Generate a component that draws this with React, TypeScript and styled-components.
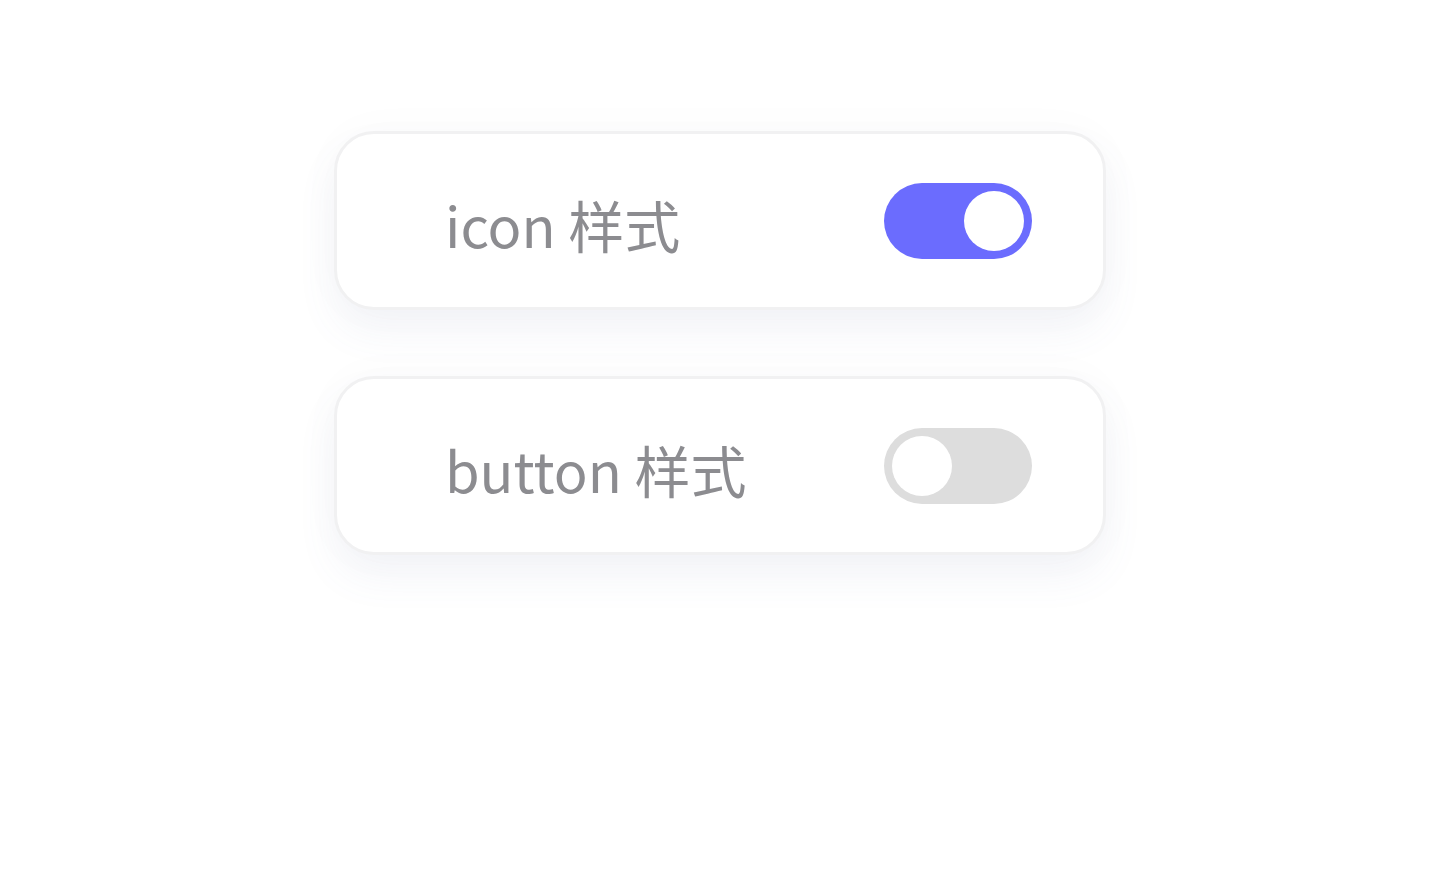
import React, { useState } from "react";
import styled, { createGlobalStyle } from "styled-components";

const GlobalStyle = createGlobalStyle`
  html, body {
    margin: 0;
    padding: 0;
    background: #ffffff;
  }
  body {
    font-family: "Noto Sans CJK SC", "Noto Sans", sans-serif;
  }
`;

const Page = styled.div`
  min-height: 100vh;
  box-sizing: border-box;
  display: flex;
  flex-direction: column;
  gap: 66px;
  padding: 131px 0 0 334px;
`;

const Card = styled.div`
  box-sizing: border-box;
  width: 772px;
  height: 179px;
  display: flex;
  align-items: center;
  justify-content: space-between;
  padding: 0 71px 0 108px;
  background: #ffffff;
  border: 3px solid #f1f1f2;
  border-radius: 40px;
  box-shadow: 0 22px 40px rgba(96, 108, 170, 0.07),
    0 0 48px rgba(0, 0, 0, 0.025);
`;

const Label = styled.span`
  font-size: 56px;
  line-height: 1;
  color: #8c8c90;
  margin-top: 6px;
`;

const Track = styled.button<{ on: boolean }>`
  position: relative;
  width: 148px;
  height: 76px;
  padding: 0;
  border: none;
  border-radius: 38px;
  cursor: pointer;
  background: ${(p) => (p.on ? "#6b6cfe" : "#dddddd")};
`;

const Knob = styled.span<{ on: boolean }>`
  position: absolute;
  top: 8px;
  left: ${(p) => (p.on ? "80px" : "8px")};
  width: 60px;
  height: 60px;
  border-radius: 50%;
  background: #ffffff;
  transition: left 0.2s;
`;

type RowPropsType = {
  label: string;
  initial: boolean;
};

const Row = (props: RowPropsType) => {
  const [on, setOn] = useState(props.initial);
  return (
    <Card>
      <Label>{props.label}</Label>
      <Track on={on} onClick={() => setOn(!on)}>
        <Knob on={on} />
      </Track>
    </Card>
  );
};

export default function App() {
  return (
    <>
      <GlobalStyle />
      <Page>
        <Row label="icon 样式" initial={true} />
        <Row label="button 样式" initial={false} />
      </Page>
    </>
  );
}
